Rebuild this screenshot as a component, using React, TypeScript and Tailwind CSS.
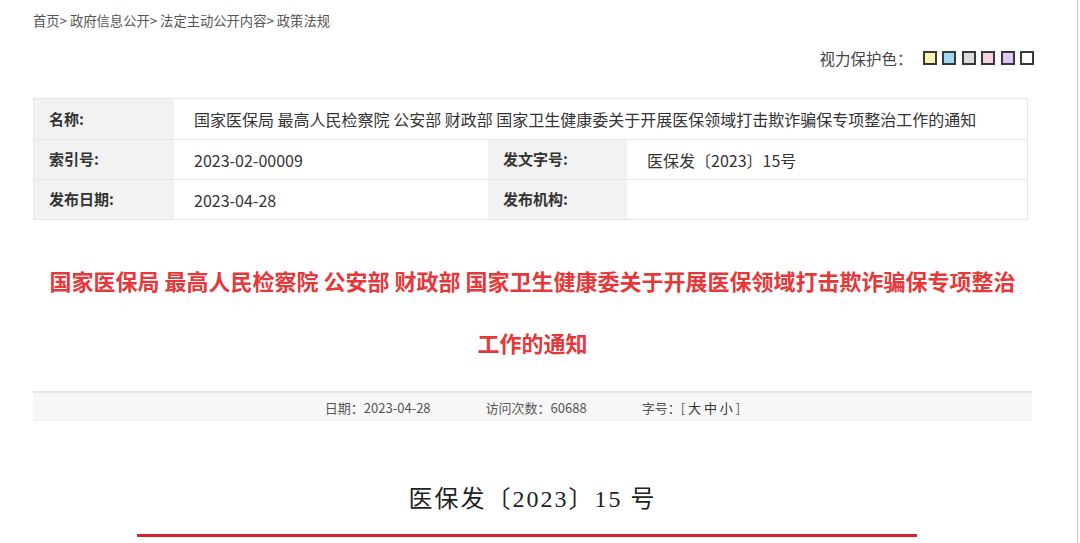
const FONT = '"Noto Sans CJK SC", "Noto Sans", sans-serif';

const SWATCHES = ["#faf6ac", "#9fd9f2", "#dcdcdc", "#f8d3db", "#e0c9f5", "#ffffff"];

function Label({ children, className = "" }: { children: React.ReactNode; className?: string }) {
  return (
    <div className={`flex items-center bg-[#f2f2f2] pl-[15px] text-[15px] font-bold text-[#333] ${className}`}>
      {children}
    </div>
  );
}

function Value({ children, className = "" }: { children?: React.ReactNode; className?: string }) {
  return (
    <div className={`flex items-center bg-white pl-[20px] text-[16px] text-[#333] ${className}`}>
      {children}
    </div>
  );
}

export default function App() {
  return (
    <div
      className="min-h-[543px] w-[1078px] border-r border-[#c9c9c9] bg-white"
      style={{ fontFamily: FONT }}
    >
      <div className="ml-[33px] w-[999px] pt-[11px]">
        {/* breadcrumb */}
        <div className="text-[13.3px] leading-[20px] text-[#555]">
          首页&gt; 政府信息公开&gt; 法定主动公开内容&gt; 政策法规
        </div>

        {/* eye-care colours */}
        <div className="mt-[16px] flex items-center justify-end">
          <span className="text-[15.5px] leading-[22px] text-[#444]">视力保护色：</span>
          <div className="ml-[10px] mr-[-2px] flex gap-[5.5px]">
            {SWATCHES.map((c) => (
              <span
                key={c}
                className="block h-[14px] w-[14px] border-2 border-[#3a3a3a]"
                style={{ backgroundColor: c }}
              />
            ))}
          </div>
        </div>

        {/* meta table */}
        <div className="mt-[29px] grid w-[995px] grid-cols-[140px_314px_139px_1fr] border border-[#e6e6e6] [&>div]:h-[40px]">
          <Label>名称:</Label>
          <Value className="col-span-3">
            国家医保局 最高人民检察院 公安部 财政部 国家卫生健康委关于开展医保领域打击欺诈骗保专项整治工作的通知
          </Value>
          <Label className="border-t border-[#e6e6e6]">索引号:</Label>
          <Value className="border-t border-[#e6e6e6]">2023-02-00009</Value>
          <Label className="border-t border-[#e6e6e6]">发文字号:</Label>
          <Value className="border-t border-[#e6e6e6]">医保发〔2023〕15号</Value>
          <Label className="border-t border-[#e6e6e6]">发布日期:</Label>
          <Value className="border-t border-[#e6e6e6]">2023-04-28</Value>
          <Label className="border-t border-[#e6e6e6]">发布机构:</Label>
          <Value className="border-t border-[#e6e6e6]" />
        </div>

        {/* title */}
        <h1 className="mt-[29px] px-[12px] text-center text-[22px] font-bold leading-[62px] text-[#e5383b]">
          国家医保局 最高人民检察院 公安部 财政部 国家卫生健康委关于开展医保领域打击欺诈骗保专项整治工作的通知
        </h1>

        {/* info bar */}
        <div className="mt-[18px] flex h-[30px] items-center justify-center border-t-2 border-b border-t-[#e4e4e4] border-b-[#eeeeee] bg-[#f7f7f7] pt-[2px] text-[13px] text-[#555]">
          <span>日期：2023-04-28</span>
          <span className="ml-[55px]">访问次数：60688</span>
          <span className="ml-[55px]">
            字号：[ <span className="text-[#333]">大</span> <span className="text-[#333]">中</span>{" "}
            <span className="text-[#333]">小</span> ]
          </span>
        </div>

        {/* document number */}
        <div
          className="mt-[63px] text-center text-[24px] leading-[30px] tracking-[2px] text-[#222]"
          style={{ fontFamily: '"Liberation Serif", "Noto Sans CJK SC", serif' }}
        >
          医保发〔2023〕15 号
        </div>
        <div className="ml-[104px] mt-[20px] h-[3px] w-[780px] bg-[#d9202f]" />
      </div>
    </div>
  );
}
